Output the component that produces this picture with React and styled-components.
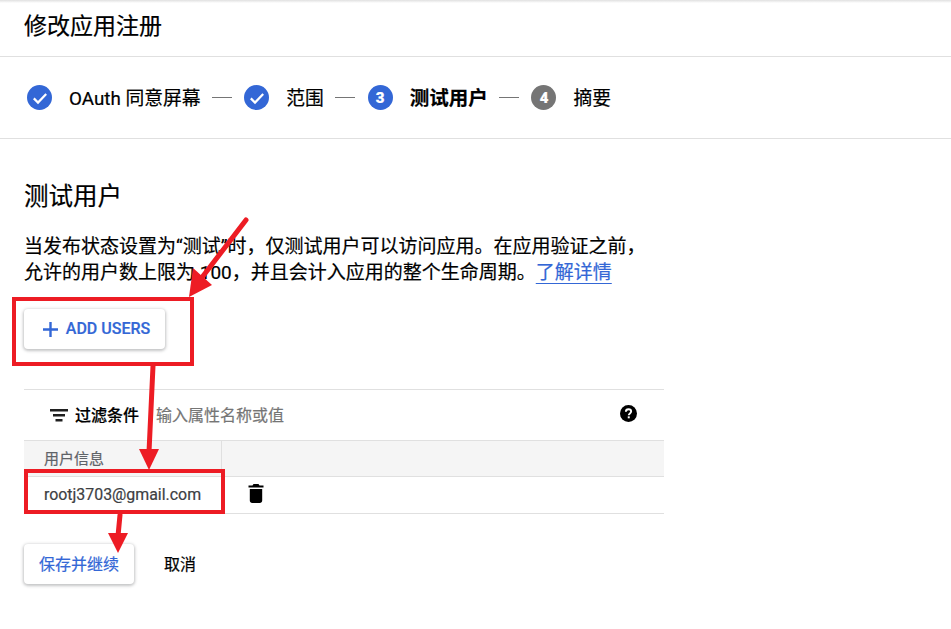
import React from 'react'
import styled, { createGlobalStyle } from 'styled-components'

const GlobalStyle = createGlobalStyle`
  html, body {
    margin: 0;
    padding: 0;
    background: #fff;
  }
  body {
    font-family: Roboto, "Noto Sans CJK SC", sans-serif;
    color: #000;
    -webkit-text-stroke: 0.2px;
  }
`

const steps = [
  { label: 'OAuth 同意屏幕', done: true },
  { label: '范围', done: true },
  { label: '测试用户', num: 3, active: true },
  { label: '摘要', num: 4 },
]

const Check = () => (
  <svg width="18" height="18" viewBox="0 0 18 18">
    <path d="M2.800 9.400l4.200 4.200 8.200-8.700" fill="none" stroke="#fff" strokeWidth="2.200" />
  </svg>
)

const FilterIcon = () => (
  <svg width="18" height="18" viewBox="0 0 18 18">
    <path d="M0 3h18v2.400H0zM3 8h12v2.400H3zM5.500 13h7v2.400h-7z" fill="#202020" />
  </svg>
)

const HelpIcon = () => (
  <svg width="17" height="17" viewBox="0 0 18 18">
    <circle cx="9" cy="9" r="9" fill="#000" />
    <path d="M6.200 7.200c0-1.600 1.200-2.700 2.800-2.700s2.800 1.100 2.800 2.500c0 1.900-2.500 2-2.500 3.800" fill="none" stroke="#fff" strokeWidth="2" />
    <rect x="8.200" y="12" width="2.100" height="2.100" fill="#fff" />
  </svg>
)

const TrashIcon = () => (
  <svg width="16" height="19" viewBox="0 0 16 19">
    <path d="M5.500 0h5l1 1.500H15.500v2H.5v-2h4zM1.800 5h12.400v11.500c0 1.400-1 2.500-2.400 2.500H4.200c-1.400 0-2.400-1.100-2.400-2.500z" fill="#000" />
  </svg>
)

const Annotations = () => (
  <Overlay width="951" height="629" viewBox="0 0 951 629">
    <g fill="none" stroke="#ed1c24" strokeWidth="4">
      <rect x="14" y="299" width="178" height="65" />
      <rect x="26" y="471" width="197" height="41" />
    </g>
    <g stroke="#ed1c24" strokeWidth="5" strokeLinecap="round">
      <line x1="246" y1="220" x2="200" y2="280" />
      <line x1="153" y1="366" x2="149" y2="452" />
      <line x1="120" y1="515" x2="118" y2="536" />
    </g>
    <g fill="#ed1c24">
      <polygon points="189,297 193,268 212,285" />
      <polygon points="149,470 139,449 159,449" />
      <polygon points="118,553 108,533 128,533" />
    </g>
  </Overlay>
)

export default function App() {
  return (
    <Page>
      <GlobalStyle />
      <Header>修改应用注册</Header>
      <Stepper>
        {steps.map((s, i) => (
          <React.Fragment key={s.label}>
            {i > 0 && <Connector />}
            <Step>
              <Circle $grey={s.num === 4}>{s.done ? <Check /> : s.num}</Circle>
              <StepLabel $active={s.active}>{s.label}</StepLabel>
            </Step>
          </React.Fragment>
        ))}
      </Stepper>
      <Content>
        <Heading>测试用户</Heading>
        <Description>
          当发布状态设置为“测试”时，仅测试用户可以访问应用。在应用验证之前，
          <br />
          允许的用户数上限为 100，并且会计入应用的整个生命周期。<LearnMore>了解详情</LearnMore>
        </Description>
        <AddButton>
          <PlusSign>
            <svg width="15" height="15" viewBox="0 0 15 15">
              <path d="M6.300 0h2.400v6.300H15v2.400H8.700V15H6.300V8.700H0V6.300h6.300z" fill="#3367d6" />
            </svg>
          </PlusSign>
          ADD USERS
        </AddButton>
        <Table>
          <FilterRow>
            <FilterLabel>
              <FilterIcon />
              <FilterText>过滤条件</FilterText>
            </FilterLabel>
            <FilterInput>输入属性名称或值</FilterInput>
            <HelpSlot>
              <HelpIcon />
            </HelpSlot>
          </FilterRow>
          <HeadRow>
            <FirstCol>用户信息</FirstCol>
          </HeadRow>
          <BodyRow>
            <FirstCol>rootj3703@gmail.com</FirstCol>
            <TrashSlot>
              <TrashIcon />
            </TrashSlot>
          </BodyRow>
        </Table>
        <Actions>
          <SaveButton>保存并继续</SaveButton>
          <CancelButton>取消</CancelButton>
        </Actions>
      </Content>
      <Annotations />
    </Page>
  )
}

const Page = styled.div`
  position: relative;
  width: 951px;
  height: 629px;
  overflow: hidden;
  background: #fff;
  &::before {
    content: '';
    position: absolute;
    top: 0;
    left: 0;
    right: 0;
    height: 3px;
    background: linear-gradient(#e0e0e0, #fff);
  }
`
const Overlay = styled.svg`
  position: absolute;
  top: 0;
  left: 0;
  pointer-events: none;
`
const Header = styled.div`
  height: 57px;
  box-sizing: border-box;
  padding: 9px 0 0 24px;
  font-size: 23px;
  line-height: 36px;
  border-bottom: 1px solid #e0e0e0;
`
const Stepper = styled.div`
  height: 82px;
  box-sizing: border-box;
  display: flex;
  align-items: center;
  padding: 0 0 0 27px;
  border-bottom: 1px solid #e0e0e0;
`
const Step = styled.div`
  display: flex;
  align-items: center;
  gap: 17px;
`
const Circle = styled.div`
  width: 25px;
  height: 25px;
  border-radius: 50%;
  display: flex;
  align-items: center;
  justify-content: center;
  font-size: 15px;
  font-weight: 900;
  color: #fff;
  background: ${(p) => (p.$grey ? '#757575' : '#3367d6')};
`
const StepLabel = styled.span`
  padding-bottom: 3px;
  font-size: ${(p) => (p.$active ? '19.500px' : '18.800px')};
  font-weight: ${(p) => (p.$active ? 700 : 400)};
  white-space: nowrap;
`
const Connector = styled.div`
  width: 20px;
  height: 1px;
  background: #757575;
  margin: 0 12.800px 0 11px;
`
const Content = styled.div`
  padding: 0 0 0 24px;
`
const Heading = styled.h2`
  margin: 41px 0 0;
  font-size: 24.500px;
  font-weight: 400;
  line-height: 34px;
`
const Description = styled.p`
  margin: 20px 0 0;
  font-size: 19px;
  line-height: 26px;
  white-space: nowrap;
`
const LearnMore = styled.a`
  color: #3367d6;
  text-decoration: underline;
  text-decoration-thickness: 1px;
  text-underline-offset: 4px;
`
const RaisedButton = styled.button`
  display: flex;
  align-items: center;
  justify-content: center;
  border: none;
  border-radius: 4px;
  background: #fff;
  color: #3367d6;
  font-family: inherit;
  box-shadow: 0 1px 3px 1px rgba(60, 64, 67, 0.3);
  padding: 0;
`
const AddButton = styled(RaisedButton)`
  width: 141px;
  height: 40px;
  margin-top: 23px;
  padding: 0 0 2px 4px;
  font-size: 16px;
  font-weight: 500;
`
const PlusSign = styled.span`
  display: flex;
  margin: 2px 8px 0 0;
`
const Table = styled.div`
  width: 640px;
  margin-top: 40px;
  border-top: 1px solid #e0e0e0;
  border-bottom: 1px solid #e0e0e0;
`
const FilterRow = styled.div`
  height: 50px;
  display: flex;
  align-items: center;
  padding-left: 26px;
`
const FilterLabel = styled.div`
  display: flex;
  align-items: center;
  gap: 7px;
  font-size: 16px;
  font-weight: 500;
`
const FilterText = styled.span`
  padding-bottom: 2px;
`
const FilterInput = styled.div`
  margin-left: 17px;
  padding-bottom: 2px;
  font-size: 16px;
  color: #757575;
`
const HelpSlot = styled.div`
  display: flex;
  margin-left: auto;
  margin-right: 27px;
  padding-bottom: 4px;
`
const HeadRow = styled.div`
  height: 37px;
  display: flex;
  background: #f5f5f5;
  border-top: 1px solid #e0e0e0;
  border-bottom: 1px solid #e0e0e0;
  box-sizing: border-box;
  color: #5f6368;
  font-size: 15px;
`
const BodyRow = styled.div`
  height: 36px;
  display: flex;
  color: #3c4043;
  font-size: 15.900px;
`
const FirstCol = styled.div`
  width: 198px;
  box-sizing: border-box;
  padding: 0 0 3px 20px;
  display: flex;
  align-items: center;
  border-right: 1px solid #e0e0e0;
  ${BodyRow} & {
    border-right: none;
    padding-bottom: 2px;
  }
`
const TrashSlot = styled.div`
  display: flex;
  align-items: center;
  padding: 0 0 3px 26px;
`
const Actions = styled.div`
  display: flex;
  align-items: center;
  margin-top: 30px;
`
const SaveButton = styled(RaisedButton)`
  width: 110px;
  height: 40px;
  padding-bottom: 3px;
  font-size: 16px;
`
const CancelButton = styled.button`
  border: none;
  background: none;
  padding: 0 0 3px;
  margin-left: 30px;
  font-family: inherit;
  font-size: 16px;
  color: #000;
`
